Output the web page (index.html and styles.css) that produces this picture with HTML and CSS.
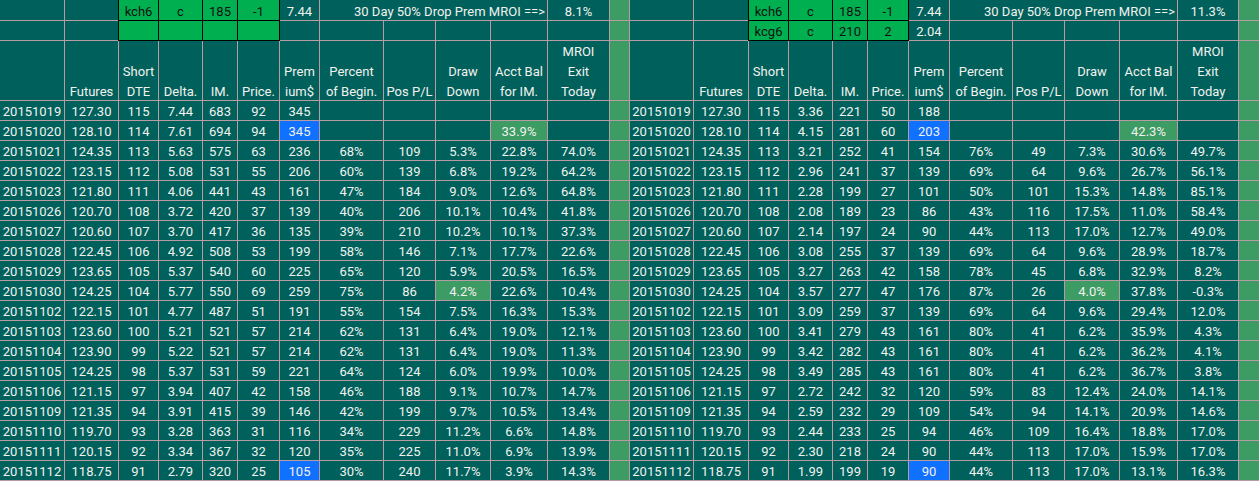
FILE: index.html
```html
<!DOCTYPE html>
<html lang="en">
<head>
<meta charset="utf-8">
<title>MROI sheet</title>
<link rel="stylesheet" href="styles.css">
</head>
<body>
<div class="sheet">
  <!-- row 1 -->
  <div class="c"></div><div class="c"></div><div class="c g">kch6</div><div class="c g">c</div><div class="c g">185</div><div class="c g">-1</div><div class="c">7.44</div><div class="c r s4">30 Day 50% Drop Prem MROI ==&gt;</div><div class="c">8.1%</div>
  <div class="c dv"></div>
  <div class="c"></div><div class="c"></div><div class="c g">kch6</div><div class="c g">c</div><div class="c g">185</div><div class="c g">-1</div><div class="c">7.44</div><div class="c r s4">30 Day 50% Drop Prem MROI ==&gt;</div><div class="c">11.3%</div>
  <div class="c dv"></div>
  <!-- row 2 -->
  <div class="c"></div><div class="c"></div><div class="c g"></div><div class="c g"></div><div class="c g"></div><div class="c g"></div><div class="c"></div><div class="c"></div><div class="c"></div><div class="c"></div><div class="c"></div><div class="c"></div>
  <div class="c dv"></div>
  <div class="c"></div><div class="c"></div><div class="c g">kcg6</div><div class="c g">c</div><div class="c g">210</div><div class="c g">2</div><div class="c">2.04</div><div class="c"></div><div class="c"></div><div class="c"></div><div class="c"></div><div class="c"></div>
  <div class="c dv"></div>
  <!-- header -->
  <div class="c h"></div><div class="c h"><span>Futures</span></div><div class="c h"><span>Short<br>DTE</span></div><div class="c h"><span>Delta.</span></div><div class="c h"><span>IM.</span></div><div class="c h"><span>Price.</span></div><div class="c h"><span>Prem<br>ium$</span></div><div class="c h"><span>Percent<br>of Begin.</span></div><div class="c h"><span>Pos P/L</span></div><div class="c h"><span>Draw<br>Down</span></div><div class="c h"><span>Acct Bal<br>for IM.</span></div><div class="c h"><span>MROI<br>Exit<br>Today</span></div>
  <div class="c dv"></div>
  <div class="c h"></div><div class="c h"><span>Futures</span></div><div class="c h"><span>Short<br>DTE</span></div><div class="c h"><span>Delta.</span></div><div class="c h"><span>IM.</span></div><div class="c h"><span>Price.</span></div><div class="c h"><span>Prem<br>ium$</span></div><div class="c h"><span>Percent<br>of Begin.</span></div><div class="c h"><span>Pos P/L</span></div><div class="c h"><span>Draw<br>Down</span></div><div class="c h"><span>Acct Bal<br>for IM.</span></div><div class="c h"><span>MROI<br>Exit<br>Today</span></div>
  <div class="c dv"></div>

  <!-- 20151019 -->
  <div class="c">20151019</div><div class="c">127.30</div><div class="c">115</div><div class="c">7.44</div><div class="c">683</div><div class="c">92</div><div class="c">345</div><div class="c"></div><div class="c"></div><div class="c"></div><div class="c"></div><div class="c"></div>
  <div class="c dv"></div>
  <div class="c">20151019</div><div class="c">127.30</div><div class="c">115</div><div class="c">3.36</div><div class="c">221</div><div class="c">50</div><div class="c">188</div><div class="c"></div><div class="c"></div><div class="c"></div><div class="c"></div><div class="c"></div>
  <div class="c dv"></div>
  <!-- 20151020 -->
  <div class="c">20151020</div><div class="c">128.10</div><div class="c">114</div><div class="c">7.61</div><div class="c">694</div><div class="c">94</div><div class="c b">345</div><div class="c"></div><div class="c"></div><div class="c"></div><div class="c lg">33.9%</div><div class="c"></div>
  <div class="c dv"></div>
  <div class="c">20151020</div><div class="c">128.10</div><div class="c">114</div><div class="c">4.15</div><div class="c">281</div><div class="c">60</div><div class="c b">203</div><div class="c"></div><div class="c"></div><div class="c"></div><div class="c lg">42.3%</div><div class="c"></div>
  <div class="c dv"></div>
  <!-- 20151021 -->
  <div class="c">20151021</div><div class="c">124.35</div><div class="c">113</div><div class="c">5.63</div><div class="c">575</div><div class="c">63</div><div class="c">236</div><div class="c">68%</div><div class="c">109</div><div class="c">5.3%</div><div class="c">22.8%</div><div class="c">74.0%</div>
  <div class="c dv"></div>
  <div class="c">20151021</div><div class="c">124.35</div><div class="c">113</div><div class="c">3.21</div><div class="c">252</div><div class="c">41</div><div class="c">154</div><div class="c">76%</div><div class="c">49</div><div class="c">7.3%</div><div class="c">30.6%</div><div class="c">49.7%</div>
  <div class="c dv"></div>
  <!-- 20151022 -->
  <div class="c">20151022</div><div class="c">123.15</div><div class="c">112</div><div class="c">5.08</div><div class="c">531</div><div class="c">55</div><div class="c">206</div><div class="c">60%</div><div class="c">139</div><div class="c">6.8%</div><div class="c">19.2%</div><div class="c">64.2%</div>
  <div class="c dv"></div>
  <div class="c">20151022</div><div class="c">123.15</div><div class="c">112</div><div class="c">2.96</div><div class="c">241</div><div class="c">37</div><div class="c">139</div><div class="c">69%</div><div class="c">64</div><div class="c">9.6%</div><div class="c">26.7%</div><div class="c">56.1%</div>
  <div class="c dv"></div>
  <!-- 20151023 -->
  <div class="c">20151023</div><div class="c">121.80</div><div class="c">111</div><div class="c">4.06</div><div class="c">441</div><div class="c">43</div><div class="c">161</div><div class="c">47%</div><div class="c">184</div><div class="c">9.0%</div><div class="c">12.6%</div><div class="c">64.8%</div>
  <div class="c dv"></div>
  <div class="c">20151023</div><div class="c">121.80</div><div class="c">111</div><div class="c">2.28</div><div class="c">199</div><div class="c">27</div><div class="c">101</div><div class="c">50%</div><div class="c">101</div><div class="c">15.3%</div><div class="c">14.8%</div><div class="c">85.1%</div>
  <div class="c dv"></div>
  <!-- 20151026 -->
  <div class="c">20151026</div><div class="c">120.70</div><div class="c">108</div><div class="c">3.72</div><div class="c">420</div><div class="c">37</div><div class="c">139</div><div class="c">40%</div><div class="c">206</div><div class="c">10.1%</div><div class="c">10.4%</div><div class="c">41.8%</div>
  <div class="c dv"></div>
  <div class="c">20151026</div><div class="c">120.70</div><div class="c">108</div><div class="c">2.08</div><div class="c">189</div><div class="c">23</div><div class="c">86</div><div class="c">43%</div><div class="c">116</div><div class="c">17.5%</div><div class="c">11.0%</div><div class="c">58.4%</div>
  <div class="c dv"></div>
  <!-- 20151027 -->
  <div class="c">20151027</div><div class="c">120.60</div><div class="c">107</div><div class="c">3.70</div><div class="c">417</div><div class="c">36</div><div class="c">135</div><div class="c">39%</div><div class="c">210</div><div class="c">10.2%</div><div class="c">10.1%</div><div class="c">37.3%</div>
  <div class="c dv"></div>
  <div class="c">20151027</div><div class="c">120.60</div><div class="c">107</div><div class="c">2.14</div><div class="c">197</div><div class="c">24</div><div class="c">90</div><div class="c">44%</div><div class="c">113</div><div class="c">17.0%</div><div class="c">12.7%</div><div class="c">49.0%</div>
  <div class="c dv"></div>
  <!-- 20151028 -->
  <div class="c">20151028</div><div class="c">122.45</div><div class="c">106</div><div class="c">4.92</div><div class="c">508</div><div class="c">53</div><div class="c">199</div><div class="c">58%</div><div class="c">146</div><div class="c">7.1%</div><div class="c">17.7%</div><div class="c">22.6%</div>
  <div class="c dv"></div>
  <div class="c">20151028</div><div class="c">122.45</div><div class="c">106</div><div class="c">3.08</div><div class="c">255</div><div class="c">37</div><div class="c">139</div><div class="c">69%</div><div class="c">64</div><div class="c">9.6%</div><div class="c">28.9%</div><div class="c">18.7%</div>
  <div class="c dv"></div>
  <!-- 20151029 -->
  <div class="c">20151029</div><div class="c">123.65</div><div class="c">105</div><div class="c">5.37</div><div class="c">540</div><div class="c">60</div><div class="c">225</div><div class="c">65%</div><div class="c">120</div><div class="c">5.9%</div><div class="c">20.5%</div><div class="c">16.5%</div>
  <div class="c dv"></div>
  <div class="c">20151029</div><div class="c">123.65</div><div class="c">105</div><div class="c">3.27</div><div class="c">263</div><div class="c">42</div><div class="c">158</div><div class="c">78%</div><div class="c">45</div><div class="c">6.8%</div><div class="c">32.9%</div><div class="c">8.2%</div>
  <div class="c dv"></div>
  <!-- 20151030 -->
  <div class="c">20151030</div><div class="c">124.25</div><div class="c">104</div><div class="c">5.77</div><div class="c">550</div><div class="c">69</div><div class="c">259</div><div class="c">75%</div><div class="c">86</div><div class="c lg">4.2%</div><div class="c">22.6%</div><div class="c">10.4%</div>
  <div class="c dv"></div>
  <div class="c">20151030</div><div class="c">124.25</div><div class="c">104</div><div class="c">3.57</div><div class="c">277</div><div class="c">47</div><div class="c">176</div><div class="c">87%</div><div class="c">26</div><div class="c lg">4.0%</div><div class="c">37.8%</div><div class="c">-0.3%</div>
  <div class="c dv"></div>
  <!-- 20151102 -->
  <div class="c">20151102</div><div class="c">122.15</div><div class="c">101</div><div class="c">4.77</div><div class="c">487</div><div class="c">51</div><div class="c">191</div><div class="c">55%</div><div class="c">154</div><div class="c">7.5%</div><div class="c">16.3%</div><div class="c">15.3%</div>
  <div class="c dv"></div>
  <div class="c">20151102</div><div class="c">122.15</div><div class="c">101</div><div class="c">3.09</div><div class="c">259</div><div class="c">37</div><div class="c">139</div><div class="c">69%</div><div class="c">64</div><div class="c">9.6%</div><div class="c">29.4%</div><div class="c">12.0%</div>
  <div class="c dv"></div>
  <!-- 20151103 -->
  <div class="c">20151103</div><div class="c">123.60</div><div class="c">100</div><div class="c">5.21</div><div class="c">521</div><div class="c">57</div><div class="c">214</div><div class="c">62%</div><div class="c">131</div><div class="c">6.4%</div><div class="c">19.0%</div><div class="c">12.1%</div>
  <div class="c dv"></div>
  <div class="c">20151103</div><div class="c">123.60</div><div class="c">100</div><div class="c">3.41</div><div class="c">279</div><div class="c">43</div><div class="c">161</div><div class="c">80%</div><div class="c">41</div><div class="c">6.2%</div><div class="c">35.9%</div><div class="c">4.3%</div>
  <div class="c dv"></div>
  <!-- 20151104 -->
  <div class="c">20151104</div><div class="c">123.90</div><div class="c">99</div><div class="c">5.22</div><div class="c">521</div><div class="c">57</div><div class="c">214</div><div class="c">62%</div><div class="c">131</div><div class="c">6.4%</div><div class="c">19.0%</div><div class="c">11.3%</div>
  <div class="c dv"></div>
  <div class="c">20151104</div><div class="c">123.90</div><div class="c">99</div><div class="c">3.42</div><div class="c">282</div><div class="c">43</div><div class="c">161</div><div class="c">80%</div><div class="c">41</div><div class="c">6.2%</div><div class="c">36.2%</div><div class="c">4.1%</div>
  <div class="c dv"></div>
  <!-- 20151105 -->
  <div class="c">20151105</div><div class="c">124.25</div><div class="c">98</div><div class="c">5.37</div><div class="c">531</div><div class="c">59</div><div class="c">221</div><div class="c">64%</div><div class="c">124</div><div class="c">6.0%</div><div class="c">19.9%</div><div class="c">10.0%</div>
  <div class="c dv"></div>
  <div class="c">20151105</div><div class="c">124.25</div><div class="c">98</div><div class="c">3.49</div><div class="c">285</div><div class="c">43</div><div class="c">161</div><div class="c">80%</div><div class="c">41</div><div class="c">6.2%</div><div class="c">36.7%</div><div class="c">3.8%</div>
  <div class="c dv"></div>
  <!-- 20151106 -->
  <div class="c">20151106</div><div class="c">121.15</div><div class="c">97</div><div class="c">3.94</div><div class="c">407</div><div class="c">42</div><div class="c">158</div><div class="c">46%</div><div class="c">188</div><div class="c">9.1%</div><div class="c">10.7%</div><div class="c">14.7%</div>
  <div class="c dv"></div>
  <div class="c">20151106</div><div class="c">121.15</div><div class="c">97</div><div class="c">2.72</div><div class="c">242</div><div class="c">32</div><div class="c">120</div><div class="c">59%</div><div class="c">83</div><div class="c">12.4%</div><div class="c">24.0%</div><div class="c">14.1%</div>
  <div class="c dv"></div>
  <!-- 20151109 -->
  <div class="c">20151109</div><div class="c">121.35</div><div class="c">94</div><div class="c">3.91</div><div class="c">415</div><div class="c">39</div><div class="c">146</div><div class="c">42%</div><div class="c">199</div><div class="c">9.7%</div><div class="c">10.5%</div><div class="c">13.4%</div>
  <div class="c dv"></div>
  <div class="c">20151109</div><div class="c">121.35</div><div class="c">94</div><div class="c">2.59</div><div class="c">232</div><div class="c">29</div><div class="c">109</div><div class="c">54%</div><div class="c">94</div><div class="c">14.1%</div><div class="c">20.9%</div><div class="c">14.6%</div>
  <div class="c dv"></div>
  <!-- 20151110 -->
  <div class="c">20151110</div><div class="c">119.70</div><div class="c">93</div><div class="c">3.28</div><div class="c">363</div><div class="c">31</div><div class="c">116</div><div class="c">34%</div><div class="c">229</div><div class="c">11.2%</div><div class="c">6.6%</div><div class="c">14.8%</div>
  <div class="c dv"></div>
  <div class="c">20151110</div><div class="c">119.70</div><div class="c">93</div><div class="c">2.44</div><div class="c">233</div><div class="c">25</div><div class="c">94</div><div class="c">46%</div><div class="c">109</div><div class="c">16.4%</div><div class="c">18.8%</div><div class="c">17.0%</div>
  <div class="c dv"></div>
  <!-- 20151111 -->
  <div class="c">20151111</div><div class="c">120.15</div><div class="c">92</div><div class="c">3.34</div><div class="c">367</div><div class="c">32</div><div class="c">120</div><div class="c">35%</div><div class="c">225</div><div class="c">11.0%</div><div class="c">6.9%</div><div class="c">13.9%</div>
  <div class="c dv"></div>
  <div class="c">20151111</div><div class="c">120.15</div><div class="c">92</div><div class="c">2.30</div><div class="c">218</div><div class="c">24</div><div class="c">90</div><div class="c">44%</div><div class="c">113</div><div class="c">17.0%</div><div class="c">15.9%</div><div class="c">17.0%</div>
  <div class="c dv"></div>
  <!-- 20151112 -->
  <div class="c">20151112</div><div class="c">118.75</div><div class="c">91</div><div class="c">2.79</div><div class="c">320</div><div class="c">25</div><div class="c b">105</div><div class="c">30%</div><div class="c">240</div><div class="c">11.7%</div><div class="c">3.9%</div><div class="c">14.3%</div>
  <div class="c dv"></div>
  <div class="c">20151112</div><div class="c">118.75</div><div class="c">91</div><div class="c">1.99</div><div class="c">199</div><div class="c">19</div><div class="c b">90</div><div class="c">44%</div><div class="c">113</div><div class="c">17.0%</div><div class="c">13.1%</div><div class="c">16.3%</div>
  <div class="c dv"></div>
</div>
</body>
</html>
```

FILE: styles.css
```css
html, body {
  margin: 0;
  padding: 0;
  background: #b89ca4;
}

.sheet {
  display: grid;
  grid-template-columns:
    64px 53px 39px 43px 34px 41px 39px 63px 51px 54px 56px 61px
    19px
    63px 54px 39px 43px 34px 40px 40px 62px 51px 54px 57px 60px
    20px;
  grid-template-rows: 20px 19px 59px repeat(19, 19px);
  gap: 1px;
  padding-bottom: 1px;
  width: 1259px;
  background: #b89ca4;
  font-family: Roboto, "Open Sans", sans-serif;
  font-size: 13px;
  color: #f2f2ee;
}

.c {
  background: #00605c;
  display: flex;
  align-items: flex-end;
  justify-content: center;
  line-height: 16px;
  white-space: nowrap;
  overflow: visible;
}

.c.r {
  justify-content: flex-end;
  padding-right: 2px;
}

.s4 {
  grid-column: span 4;
}

.c.g {
  background: #00b050;
  color: #111;
  box-shadow: 0 0 0 1px #000;
}

.c.b {
  background: #1070ff;
}

.c.lg {
  background: #3d9b64;
}

.c.dv {
  background: #3d9b64;
}

.c.h {
  text-align: center;
  line-height: 20px;
}

.c.h span {
  margin-bottom: -2px;
}
```
